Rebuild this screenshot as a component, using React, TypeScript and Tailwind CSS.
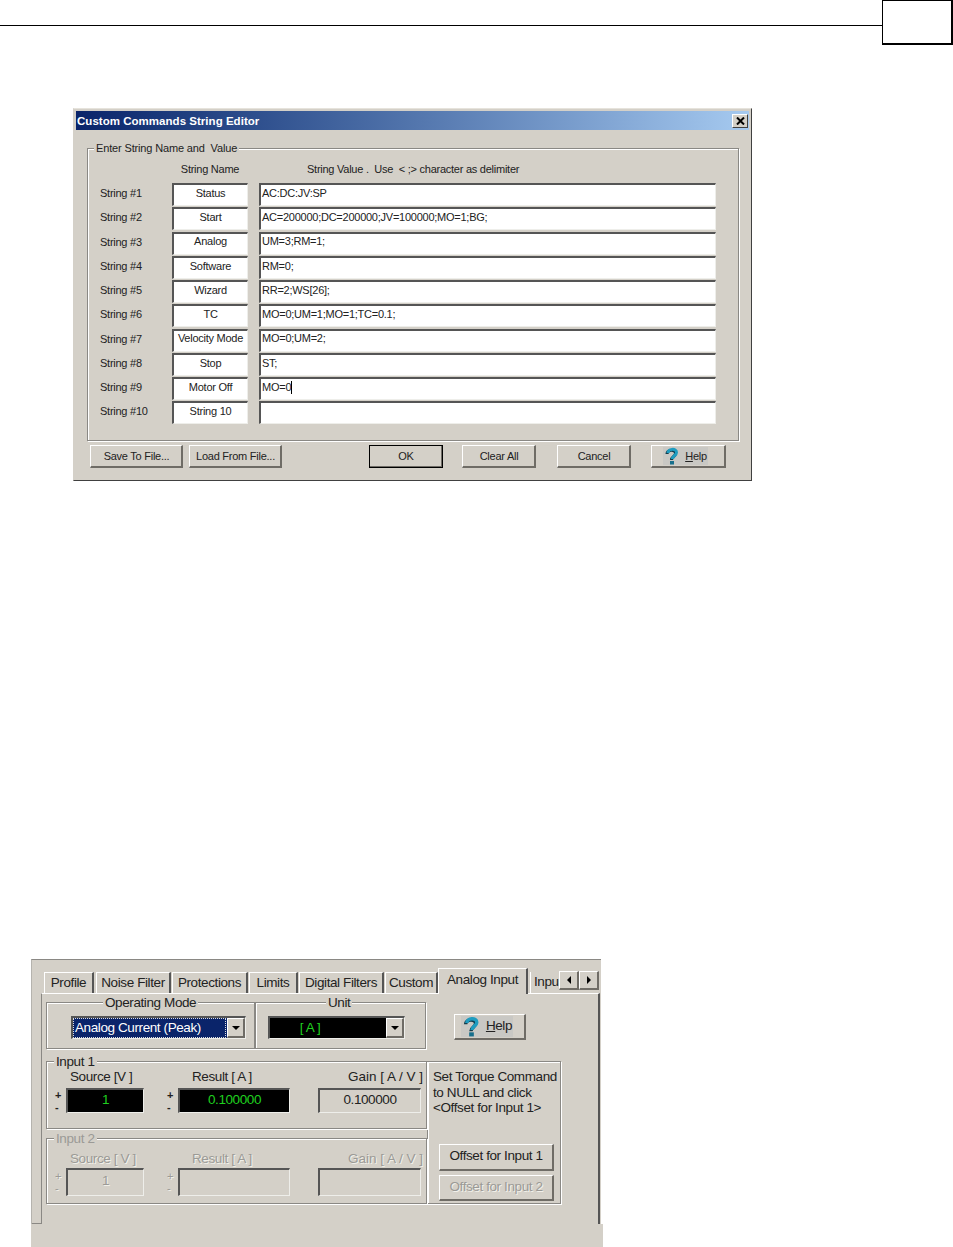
const STRINGS = [
  ['String #1', 'Status', 'AC:DC:JV:SP'],
  ['String #2', 'Start', 'AC=200000;DC=200000;JV=100000;MO=1;BG;'],
  ['String #3', 'Analog', 'UM=3;RM=1;'],
  ['String #4', 'Software', 'RM=0;'],
  ['String #5', 'Wizard', 'RR=2;WS[26];'],
  ['String #6', 'TC', 'MO=0;UM=1;MO=1;TC=0.1;'],
  ['String #7', 'Velocity Mode', 'MO=0;UM=2;'],
  ['String #8', 'Stop', 'ST;'],
  ['String #9', 'Motor Off', 'MO=0'],
  ['String #10', 'String 10', ''],
];

const TABS = [
  { label: 'Profile', w: 'w-[50px]' },
  { label: 'Noise Filter', w: 'w-[75px] ml-[2px]' },
  { label: 'Protections', w: 'w-[76px] ml-[1px]' },
  { label: 'Limits', w: 'w-[49px] ml-[1px]' },
  { label: 'Digital Filters', w: 'w-[85px] ml-[1px]' },
  { label: 'Custom', w: 'w-[53px] ml-[1px]' },
];

function HelpIcon({ size = 18 }: { size?: number }) {
  return (
    <svg width={size} height={size} viewBox="0 0 18 18" fill="none">
      <path d="M5 6 C5 1.5 13.5 1 13.5 5.5 C13.5 8.5 9.5 8.5 9.5 12" stroke="#123c4c" strokeWidth="3" transform="translate(-1 1)" />
      <path d="M5 6 C5 1.5 13.5 1 13.5 5.5 C13.5 8.5 9.5 8.5 9.5 12" stroke="#1f9cc0" strokeWidth="3" />
      <rect x="7" y="14" width="4" height="3.5" fill="#176f8c" />
    </svg>
  );
}

function Arrow({ dir = 'down' }: { dir?: 'down' | 'left' | 'right' }) {
  const pts = dir === 'down' ? '0,0 8,0 4,4' : dir === 'left' ? '4,0 4,8 0,4' : '0,0 0,8 4,4';
  return (
    <svg width={dir === 'down' ? 8 : 4} height={dir === 'down' ? 4 : 8}>
      <polygon points={pts} fill="#000" />
    </svg>
  );
}

function Btn({ children, className = '' }: { children: React.ReactNode; className?: string }) {
  return (
    <div
      className={`flex items-center justify-center bg-[#d4d0c8] border-t border-l border-white border-r-2 border-b-2 border-r-[#6f6c66] border-b-[#6f6c66] ${className}`}
    >
      {children}
    </div>
  );
}

function SunkenBox({ children, className = '' }: { children?: React.ReactNode; className?: string }) {
  return (
    <div
      className={`flex items-center border-t-2 border-l-2 border-t-[#555] border-l-[#555] border-r border-b border-r-[#eeeeea] border-b-[#eeeeea] ${className}`}
    >
      {children}
    </div>
  );
}

function Group({
  legend,
  legendClass,
  className = '',
  children,
}: {
  legend: string;
  legendClass: string;
  className?: string;
  children?: React.ReactNode;
}) {
  return (
    <div className={`relative border border-[#8a8884] shadow-[inset_1px_1px_0_#fff,1px_1px_0_#fff] ${className}`}>
      <span className={`absolute -top-[8px] bg-[#d4d0c8] px-[2px] leading-[15px] whitespace-pre ${legendClass}`}>{legend}</span>
      {children}
    </div>
  );
}

function HelpLabel({ size }: { size: number }) {
  return (
    <div className="flex items-center bg-[#c9c8c4] pr-[1px] mr-[5px]">
      <HelpIcon size={size} />
      <span className="ml-[4px]">
        <span className="underline">H</span>elp
      </span>
    </div>
  );
}

function Dialog() {
  return (
    <div className="ml-[73px] mt-[63px] w-[679px] h-[373px] bg-[#d4d0c8] border-t border-l border-t-[#e6e3dc] border-l-[#d4d0c8] border-r border-b border-r-[#404040] border-b-[#404040] p-[2px] text-[11px] tracking-[-0.25px] text-[#222] font-['Liberation_Sans',Arial,sans-serif]">
      <div className="h-[19px] flex items-center justify-between bg-gradient-to-r from-[#0a246a] to-[#a6caf0] pl-[1px] pr-[1px]">
        <span className="text-white font-bold text-[11.5px] tracking-[0.03px] pt-[2px]">Custom Commands String Editor</span>
        <div className="w-[16px] h-[14px] bg-[#d4d0c8] flex items-center justify-center border-t border-l border-white border-r border-b border-r-[#404040] border-b-[#404040]">
          <svg width="9" height="8" viewBox="0 0 9 8">
            <path d="M1 0.5 L8 7.5 M8 0.5 L1 7.5" stroke="#000" strokeWidth="2" />
          </svg>
        </div>
      </div>
      <Group
        legend="Enter String Name and  Value"
        legendClass="left-[6px] tracking-[-0.15px]"
        className="ml-[11px] mt-[18px] w-[652px] h-[293px] pl-[12px] pt-[10px]"
      >
        <div className="flex h-[21px] mb-[3px] items-center">
          <span className="w-[72px]" />
          <span className="w-[76px] text-center whitespace-nowrap">String Name</span>
          <span className="ml-[59px] whitespace-pre">String Value .  Use  &lt; ;&gt; character as delimiter</span>
        </div>
        {STRINGS.map(([label, name, value]) => (
          <div key={label} className="flex h-[24.25px] items-start">
            <span className="w-[72px] mt-[2px] leading-[17px]">{label}</span>
            <SunkenBox className="w-[76px] h-[23px] bg-white justify-center whitespace-nowrap pb-[4px]">{name}</SunkenBox>
            <SunkenBox className="ml-[11px] w-[457px] h-[23px] bg-white pl-[1px] whitespace-nowrap pb-[4px]">
              {value}
              {label === 'String #9' && <span className="w-px h-[13px] bg-black" />}
            </SunkenBox>
          </div>
        ))}
      </Group>
      <div className="flex mt-[4px] ml-[14px] h-[23px]">
        <Btn className="w-[93px] pt-[1px] pl-[1px]">Save To File...</Btn>
        <Btn className="w-[93px] ml-[6px] pt-[1px] pl-[1px]">Load From File...</Btn>
        <Btn className="w-[74px] ml-[87px] pt-[1px] pl-[1px] outline outline-1 outline-black -outline-offset-1">OK</Btn>
        <Btn className="w-[74px] ml-[19px] pt-[1px] pl-[1px]">Clear All</Btn>
        <Btn className="w-[74px] ml-[21px] pt-[1px] pl-[1px]">Cancel</Btn>
        <Btn className="w-[75px] ml-[20px]">
          <HelpLabel size={18} />
        </Btn>
      </div>
    </div>
  );
}

function Display({ value, className = '' }: { value: string; className?: string }) {
  return <SunkenBox className={`bg-black text-[#1fd01f] justify-center pb-[2px] ${className}`}>{value}</SunkenBox>;
}

function InputRow({ disabled = false }: { disabled?: boolean }) {
  const text = disabled ? 'text-[#9b9a96] [text-shadow:1px_1px_0_#f2f0ea]' : '';
  const sign = `flex flex-col justify-center w-[11px] text-[11px] leading-[12px] ${disabled ? 'font-normal' : 'font-bold'}`;
  const boxH = disabled ? 'h-[28px]' : 'h-[25px] mt-[2px]';
  return (
    <div className={`flex flex-col ${text}`}>
      <div className="flex h-[18px] items-center whitespace-nowrap">
        <span className="ml-[23px] w-[63px]">{disabled ? 'Source [ V ]' : 'Source [V ]'}</span>
        <span className="ml-[59px] w-[63px]">Result [ A ]</span>
        <span className="ml-[93px] tracking-[0px]">Gain [ A / V ]</span>
      </div>
      <div className="flex">
        <div className="ml-[8px] flex">
          <div className={`${sign} ${boxH}`}>
            <span>+</span>
            <span>-</span>
          </div>
          {disabled ? (
            <SunkenBox className={`w-[78px] justify-center pb-[2px] ${boxH}`}>1</SunkenBox>
          ) : (
            <Display value="1" className={`w-[78px] ${boxH}`} />
          )}
        </div>
        <div className="ml-[23px] flex">
          <div className={`${sign} ${boxH}`}>
            <span>+</span>
            <span>-</span>
          </div>
          {disabled ? (
            <SunkenBox className={`w-[112px] ${boxH}`} />
          ) : (
            <Display value="0.100000" className={`w-[112px] ${boxH}`} />
          )}
        </div>
        <SunkenBox className={`ml-[28px] w-[103px] justify-center pb-[2px] ${boxH}`}>{disabled ? '' : '0.100000'}</SunkenBox>
      </div>
    </div>
  );
}

function TorquePanel() {
  return (
    <div className="flex flex-col items-stretch">
      {/* tab strip and upper pane */}
      <div className="relative w-[570px] h-[265px] bg-[#d4d0c8] border-t border-t-[#8a8884] border-l border-l-[#b5b3ae]">
        <div className="relative flex h-[33px] items-end pl-[12px]">
          {TABS.map((t) => (
            <div
              key={t.label}
              className={`h-[21px] flex items-center justify-center border-t border-l border-t-white border-l-white border-r-2 border-r-[#555] whitespace-nowrap ${t.w}`}
            >
              {t.label}
            </div>
          ))}
          <div className="relative z-10 -mb-[1px] h-[26px] w-[90px] pb-[2px] bg-[#d4d0c8] flex items-center justify-center border-t border-l border-t-white border-l-white border-r-2 border-r-[#555] whitespace-nowrap">
            Analog Input
          </div>
          <div className="ml-[2px] h-[21px] w-[29px] flex items-center overflow-hidden pl-[3px] border-l border-l-white">Inpu</div>
          <Btn className="w-[20px] h-[19px] mb-[3px]">
            <Arrow dir="left" />
          </Btn>
          <Btn className="w-[20px] h-[19px] mb-[3px]">
            <Arrow dir="right" />
          </Btn>
        </div>
        <div className="ml-[9px] w-[559px] h-[231px] border-t border-t-white border-l border-l-[#8a8884] border-r-2 border-r-[#555] pl-[4px] pt-[8px]">
          <div className="flex items-start">
            <Group legend="Operating Mode" legendClass="left-[56px]" className="w-[209px] h-[47px] flex items-center pl-[24px] pt-[4px]">
              <SunkenBox className="w-[175px] h-[23px] bg-[#0a246a] text-white pr-[19px] relative">
                <span className="border border-dotted border-[#ddd] w-full h-full flex items-center pl-[1px] whitespace-nowrap">Analog Current (Peak)</span>
                <Btn className="absolute right-0 top-0 w-[18px] h-[20px]">
                  <Arrow />
                </Btn>
              </SunkenBox>
            </Group>
            <Group legend="Unit" legendClass="left-[70px]" className="w-[171px] h-[47px] flex items-center pl-[12px] pt-[4px]">
              <SunkenBox className="w-[137px] h-[23px] bg-black text-[#1fd01f] relative justify-center pr-[54px]">
                [ A ]
                <Btn className="absolute right-0 top-0 w-[18px] h-[20px]">
                  <Arrow />
                </Btn>
              </SunkenBox>
            </Group>
            <Btn className="ml-[28px] mt-[12px] w-[72px] h-[26px]">
              <HelpLabel size={21} />
            </Btn>
          </div>
          <div className="flex mt-[12px]">
            <div className="w-[381px]">
              <Group legend="Input 1" legendClass="left-[7px]" className="h-[68px] pt-[6px]">
                <InputRow />
              </Group>
              <Group legend="Input 2" legendClass="left-[7px] text-[#9b9a96]" className="h-[66px] mt-[9px] pt-[11px]">
                <InputRow disabled />
              </Group>
            </div>
            <div className="w-[134px] h-[143px] border border-[#8a8884] shadow-[inset_1px_1px_0_#fff,1px_1px_0_#fff] pl-[5px] pt-[7px]">
              <p className="leading-[15.5px] whitespace-nowrap">
                Set Torque Command
                <br />
                to NULL and click
                <br />
                &lt;Offset for Input 1&gt;
              </p>
              <Btn className="mt-[28px] ml-[6px] w-[115px] h-[27px] whitespace-nowrap">Offset for Input 1</Btn>
              <Btn className="mt-[4px] ml-[6px] w-[115px] h-[26px] whitespace-nowrap text-[#9b9a96] [text-shadow:1px_1px_0_#f2f0ea]">
                Offset for Input 2
              </Btn>
            </div>
          </div>
        </div>
        <div className="absolute left-0 bottom-0 w-[9px] h-px bg-[#8a8884]" />
      </div>
      <div className="w-[572px] h-[23px] bg-[#d4d0c8]" />
    </div>
  );
}

export default function App() {
  return (
    <div className="w-[953px] h-[1247px] overflow-hidden bg-white font-['Liberation_Sans',Arial,sans-serif]">
      <div className="flex items-start h-[45px]">
        <div className="w-[882px] h-[26px] border-b border-b-black" />
        <div className="w-[71px] h-[45px] border border-black border-r-[2px] border-b-[2px]" />
      </div>
      <Dialog />
      <div className="ml-[31px] mt-[478px] text-[13.5px] tracking-[-0.4px] text-[#222]">
        <TorquePanel />
      </div>
    </div>
  );
}
